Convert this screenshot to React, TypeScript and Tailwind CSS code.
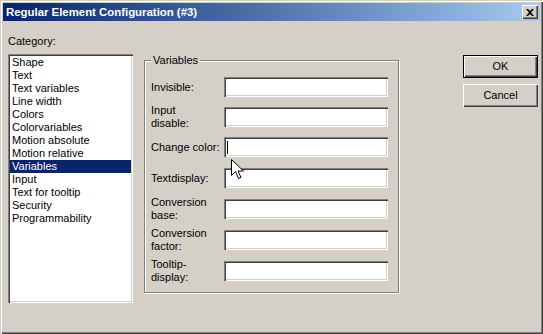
import React from 'react';

const categories = [
  'Shape',
  'Text',
  'Text variables',
  'Line width',
  'Colors',
  'Colorvariables',
  'Motion absolute',
  'Motion relative',
  'Variables',
  'Input',
  'Text for tooltip',
  'Security',
  'Programmability',
];

// label lines, top margin of the row
const fields: { label: string[]; mt: string; caret?: boolean }[] = [
  { label: ['Invisible:'], mt: 'mt-0' },
  { label: ['Input', 'disable:'], mt: 'mt-[10px]' },
  { label: ['Change color:'], mt: 'mt-[10px]', caret: true },
  { label: ['Textdisplay:'], mt: 'mt-[11px]' },
  { label: ['Conversion', 'base:'], mt: 'mt-[11px]' },
  { label: ['Conversion', 'factor:'], mt: 'mt-[11px]' },
  { label: ['Tooltip-', 'display:'], mt: 'mt-[11px]' },
];

const sunken =
  'shadow-[inset_1px_1px_0_#808080,inset_2px_2px_0_#404040,inset_-1px_-1px_0_#ffffff,inset_-2px_-2px_0_#d4d0c8]';
const raised =
  'shadow-[inset_1px_1px_0_#ffffff,inset_-1px_-1px_0_#404040,inset_-2px_-2px_0_#808080]';

const WinButton: React.FC<{ label: string; isDefault?: boolean; className?: string }> = ({
  label,
  isDefault,
  className,
}) => {
  if (isDefault) {
    return (
      <div className={`w-[75px] h-[23px] border border-black ${className ?? ''}`}>
        <div className={`w-full h-full flex items-center justify-center ${raised}`}>{label}</div>
      </div>
    );
  }
  return (
    <div className={`w-[75px] h-[23px] flex items-center justify-center ${raised} ${className ?? ''}`}>
      {label}
    </div>
  );
};

const App: React.FC = () => {
  return (
    <div
      className="relative w-[543px] h-[334px] overflow-hidden bg-[#d4d0c8] p-[3px] text-[11px] leading-[13px] text-black font-['Liberation_Sans',Arial,sans-serif] shadow-[inset_1px_1px_0_#d4d0c8,inset_2px_2px_0_#ffffff,inset_-1px_-1px_0_#404040,inset_-2px_-2px_0_#808080]"
    >
      {/* title bar */}
      <div className="h-[18px] flex items-center justify-between pl-[3px] pr-[2px] bg-gradient-to-r from-[#0a246a] to-[#a6caf0]">
        <span className="text-white font-bold text-[11.4px]">Regular Element Configuration (#3)</span>
        <div className={`w-[16px] h-[14px] bg-[#d4d0c8] flex items-center justify-center ${raised}`}>
          <svg width="8" height="7" viewBox="0 0 8 7">
            <path d="M0 0h2l2 2 2-2h2L5 3.5 8 7H6L4 5 2 7H0l3-3.5z" fill="#000" />
          </svg>
        </div>
      </div>

      {/* body */}
      <div className="flex pl-[5px]">
        <div className="flex flex-col">
          <div className="mt-[14px] h-[13px]">Category:</div>
          <div className={`mt-[6px] w-[125px] h-[249px] bg-white p-[2px] ${sunken}`}>
            {categories.map((c) => (
              <div
                key={c}
                className={`h-[13px] pl-[2px] whitespace-nowrap ${
                  c === 'Variables' ? 'bg-[#0a246a] text-white' : ''
                }`}
              >
                {c}
              </div>
            ))}
          </div>
        </div>

        <fieldset className="ml-[11px] mt-[33px] w-[255px] h-[239px] border border-[#808080] px-[6px] pt-[10px] shadow-[inset_1px_1px_0_#ffffff,1px_1px_0_#ffffff]">
          <legend className="px-[2px] h-[13px] bg-[#d4d0c8]">Variables</legend>
          {fields.map((f) => (
            <div key={f.label.join(' ')} className={`flex items-center h-[20px] ${f.mt}`}>
              <div className="w-[73px] shrink-0 whitespace-nowrap">
                {f.label.map((l) => (
                  <div key={l}>{l}</div>
                ))}
              </div>
              <div className={`w-[164px] h-[20px] bg-white flex items-center pl-[3px] ${sunken}`}>
                {f.caret && <span className="w-px h-[13px] bg-black" />}
              </div>
            </div>
          ))}
        </fieldset>

        <div className="ml-[64px] mt-[34px] flex flex-col">
          <WinButton label="OK" isDefault />
          <WinButton label="Cancel" className="mt-[6px]" />
        </div>
      </div>

      {/* mouse pointer */}
      <svg
        className="absolute left-[231px] top-[159px]"
        width="13"
        height="21"
        viewBox="0 0 13 21"
      >
        <path
          d="M0.5 0.5v16l4-4 3 7 2.5-1-3-6.5h5.5z"
          fill="#fff"
          stroke="#000"
          strokeWidth="1"
          strokeLinejoin="miter"
        />
      </svg>
    </div>
  );
};

export default App;
